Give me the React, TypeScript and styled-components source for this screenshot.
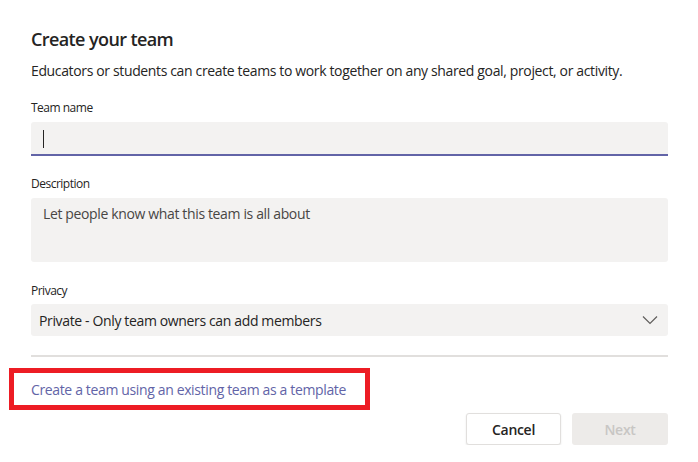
import React from "react";
import styled, { createGlobalStyle } from "styled-components";

const GlobalStyle = createGlobalStyle`
  html, body {
    margin: 0;
    padding: 0;
    background: #ffffff;
    font-family: "Open Sans", "Noto Sans", sans-serif;
    letter-spacing: -0.36px;
    color: #252423;
  }
`;

const Dialog = styled.div`
  width: 637px;
  padding: 27px 0 0 31px;
  display: flex;
  flex-direction: column;
`;

const Title = styled.h2`
  margin: 0;
  font-size: 18px;
  line-height: 24px;
  font-weight: 600;
  letter-spacing: -0.6px;
  color: #252423;
`;

const Intro = styled.p`
  margin: 10px 0 0;
  font-size: 14px;
  line-height: 20px;
  color: #252423;
`;

const Label = styled.label<{ $gap: number }>`
  display: block;
  margin-top: ${(p) => p.$gap}px;
  font-size: 12px;
  line-height: 16px;
  letter-spacing: -0.5px;
  color: #252423;
`;

const Field = styled.div<{ $height: number; $active?: boolean }>`
  box-sizing: border-box;
  margin-top: 6px;
  height: ${(p) => p.$height}px;
  background: #f3f2f1;
  border-radius: 3px 3px ${(p) => (p.$active ? "0 0" : "3px 3px")};
  border-bottom: ${(p) => (p.$active ? "2px solid #6264a7" : "none")};
  padding: ${(p) => (p.$active ? "8px" : "6px")} 12px;
  font-size: 14px;
  line-height: 20px;
  color: #484644;
  display: flex;
  align-items: flex-start;
`;

const Caret = styled.span`
  display: block;
  width: 1px;
  height: 18px;
  background: #252423;
`;

const Select = styled.div`
  box-sizing: border-box;
  margin-top: 5px;
  height: 32px;
  background: #f3f2f1;
  border-radius: 3px;
  padding: 0 10px 0 8px;
  display: flex;
  align-items: center;
  justify-content: space-between;
  font-size: 14px;
  color: #252423;
`;

const Divider = styled.hr`
  margin: 19px 0 0;
  border: none;
  height: 2px;
  background: #e1dfdd;
`;

const Highlight = styled.div`
  box-sizing: border-box;
  margin: 11px 0 0 -22px;
  width: 361px;
  height: 42px;
  border: 5px solid #ed1c24;
  padding-left: 17px;
  display: flex;
  align-items: center;
`;

const TemplateLink = styled.a`
  font-size: 14px;
  color: #6264a7;
  text-decoration: none;
  cursor: pointer;
`;

const Footer = styled.div`
  margin-top: 3px;
  display: flex;
  justify-content: flex-end;
  gap: 11px;
`;

const Button = styled.button<{ $primary?: boolean }>`
  box-sizing: border-box;
  width: ${(p) => (p.$primary ? 96 : 95)}px;
  height: 32px;
  border-radius: 3px;
  font-family: inherit;
  letter-spacing: -0.3px;
  font-size: 14px;
  font-weight: 600;
  border: ${(p) => (p.$primary ? "none" : "1px solid #e1dfdd")};
  background: ${(p) => (p.$primary ? "#edebe9" : "#ffffff")};
  color: ${(p) => (p.$primary ? "#c8c6c4" : "#252423")};
  box-shadow: ${(p) => (p.$primary ? "none" : "0 1px 2px rgba(0,0,0,0.1)")};
`;

const Chevron = () => (
  <svg width="16" height="10" viewBox="0 0 16 10" fill="none">
    <polyline points="1,1.5 8,8.5 15,1.5" stroke="#605e5c" strokeWidth="1.2" />
  </svg>
);

const App = () => {
  return (
    <>
      <GlobalStyle />
      <Dialog>
        <Title>Create your team</Title>
        <Intro>
          Educators or students can create teams to work together on any shared goal, project, or activity.
        </Intro>
        <Label $gap={19}>Team name</Label>
        <Field $height={34} $active>
          <Caret />
        </Field>
        <Label $gap={20}>Description</Label>
        <Field $height={64}>Let people know what this team is all about</Field>
        <Label $gap={21}>Privacy</Label>
        <Select>
          <span>Private - Only team owners can add members</span>
          <Chevron />
        </Select>
        <Divider />
        <Highlight>
          <TemplateLink>Create a team using an existing team as a template</TemplateLink>
        </Highlight>
        <Footer>
          <Button>Cancel</Button>
          <Button $primary>Next</Button>
        </Footer>
      </Dialog>
    </>
  );
};

export default App;
